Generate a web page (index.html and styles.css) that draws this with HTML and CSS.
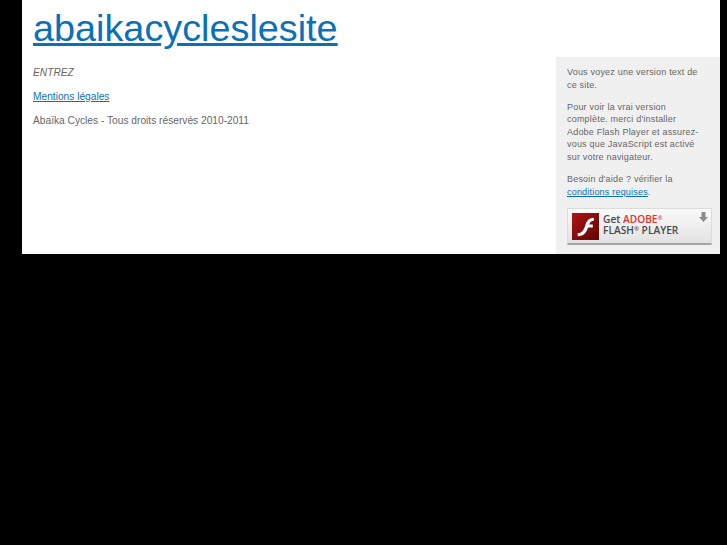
FILE: index.html
```html
<!DOCTYPE html>
<html lang="fr">
<head>
<meta charset="utf-8">
<title>abaikacycleslesite</title>
<link rel="stylesheet" href="styles.css">
</head>
<body>
<div class="page">
  <h1 class="title"><a href="#">abaikacycleslesite</a></h1>
  <div class="columns">
    <main class="main">
      <p class="enter">ENTREZ</p>
      <p><a href="#">Mentions légales</a></p>
      <p>Abaïka Cycles - Tous droits réservés 2010-2011</p>
    </main>
    <aside class="side">
      <p>Vous voyez une version text de ce site.</p>
      <p>Pour voir la vrai version complète. merci d'installer Adobe Flash Player et assurez-vous que JavaScript est activé sur votre navigateur.</p>
      <p>Besoin d'aide ? vérifier la <a href="#">conditions requises</a>.</p>
      <a class="flash" href="#">
        <svg class="flash-logo" viewBox="0 0 26 26" width="27" height="27" aria-hidden="true">
          <defs><linearGradient id="fg" x1="0" y1="0" x2="1" y2="1"><stop offset="0" stop-color="#b01414"/><stop offset="1" stop-color="#5e0606"/></linearGradient></defs>
          <rect width="26" height="26" fill="url(#fg)"/>
          <path d="M21 4.500c-5 .2-6.800 3-8.200 7.200-1.200 3.700-2.500 7.300-7.300 7.800v3c6.500-.4 8.600-4.300 10-8.500h4.500v-3h-3.500c.8-2 2-3.300 4.500-3.500z" fill="#fff"/>
        </svg>
        <span class="flash-text"><span>Get <b>ADOBE<sup>®</sup></b></span><span>FLASH<sup>®</sup> PLAYER</span></span>
        <svg class="flash-arrow" viewBox="0 0 9 11" width="9" height="11" aria-hidden="true"><path d="M2.500 0h4v5H9L4.500 10 0 5h2.500z" fill="#8c8c8c"/></svg>
      </a>
    </aside>
  </div>
</div>
</body>
</html>
```
FILE: styles.css
```css
html, body { margin: 0; padding: 0; background: #000; height: 545px; overflow: hidden; }
body { font-family: "Liberation Sans", Arial, sans-serif; color: #666; }
a { color: #0a70b8; }
.page { width: 698px; height: 254px; margin-left: 22px; background: #fff; overflow: hidden; }
.title { margin: 0; padding: 8px 0 0 11px; height: 57px; box-sizing: border-box; font-size: 37.800px; font-weight: normal; line-height: 40px; }
.columns { display: flex; height: 197px; }
.main { flex: 1; padding: 9px 11px 0; font-size: 10.200px; line-height: 14px; }
.main p { margin: 0 0 9.800px; }
.enter { font-style: italic; }
.side { width: 164px; box-sizing: border-box; background: #f0f0f0; padding: 9px 20px 0 11px; font-size: 9px; line-height: 12.600px; letter-spacing: 0.200px; }
.side p { margin: 0 0 9.400px; }
.flash { display: flex; align-items: flex-start; position: relative; box-sizing: border-box; width: 145px; height: 37px; margin-top: 2px; padding: 4px 0 0 4px; background: linear-gradient(#fafafa, #e2e2e2); border: 1px solid #dcdcdc; border-bottom: 2px solid #a6a6a6; text-decoration: none; letter-spacing: 0; }
.flash-logo { flex: none; }
.flash-text { display: flex; flex-direction: column; margin: 1px 0 0 4px; font-family: "Open Sans", sans-serif; font-weight: 600; font-size: 10.200px; line-height: 11.500px; color: #4a4a4a; }
.flash-text b { color: #e8302a; font-weight: 600; }
.flash-text sup { font-size: 6px; line-height: 0; vertical-align: 3px; }
.flash-arrow { position: absolute; top: 3px; right: 3px; }
```
